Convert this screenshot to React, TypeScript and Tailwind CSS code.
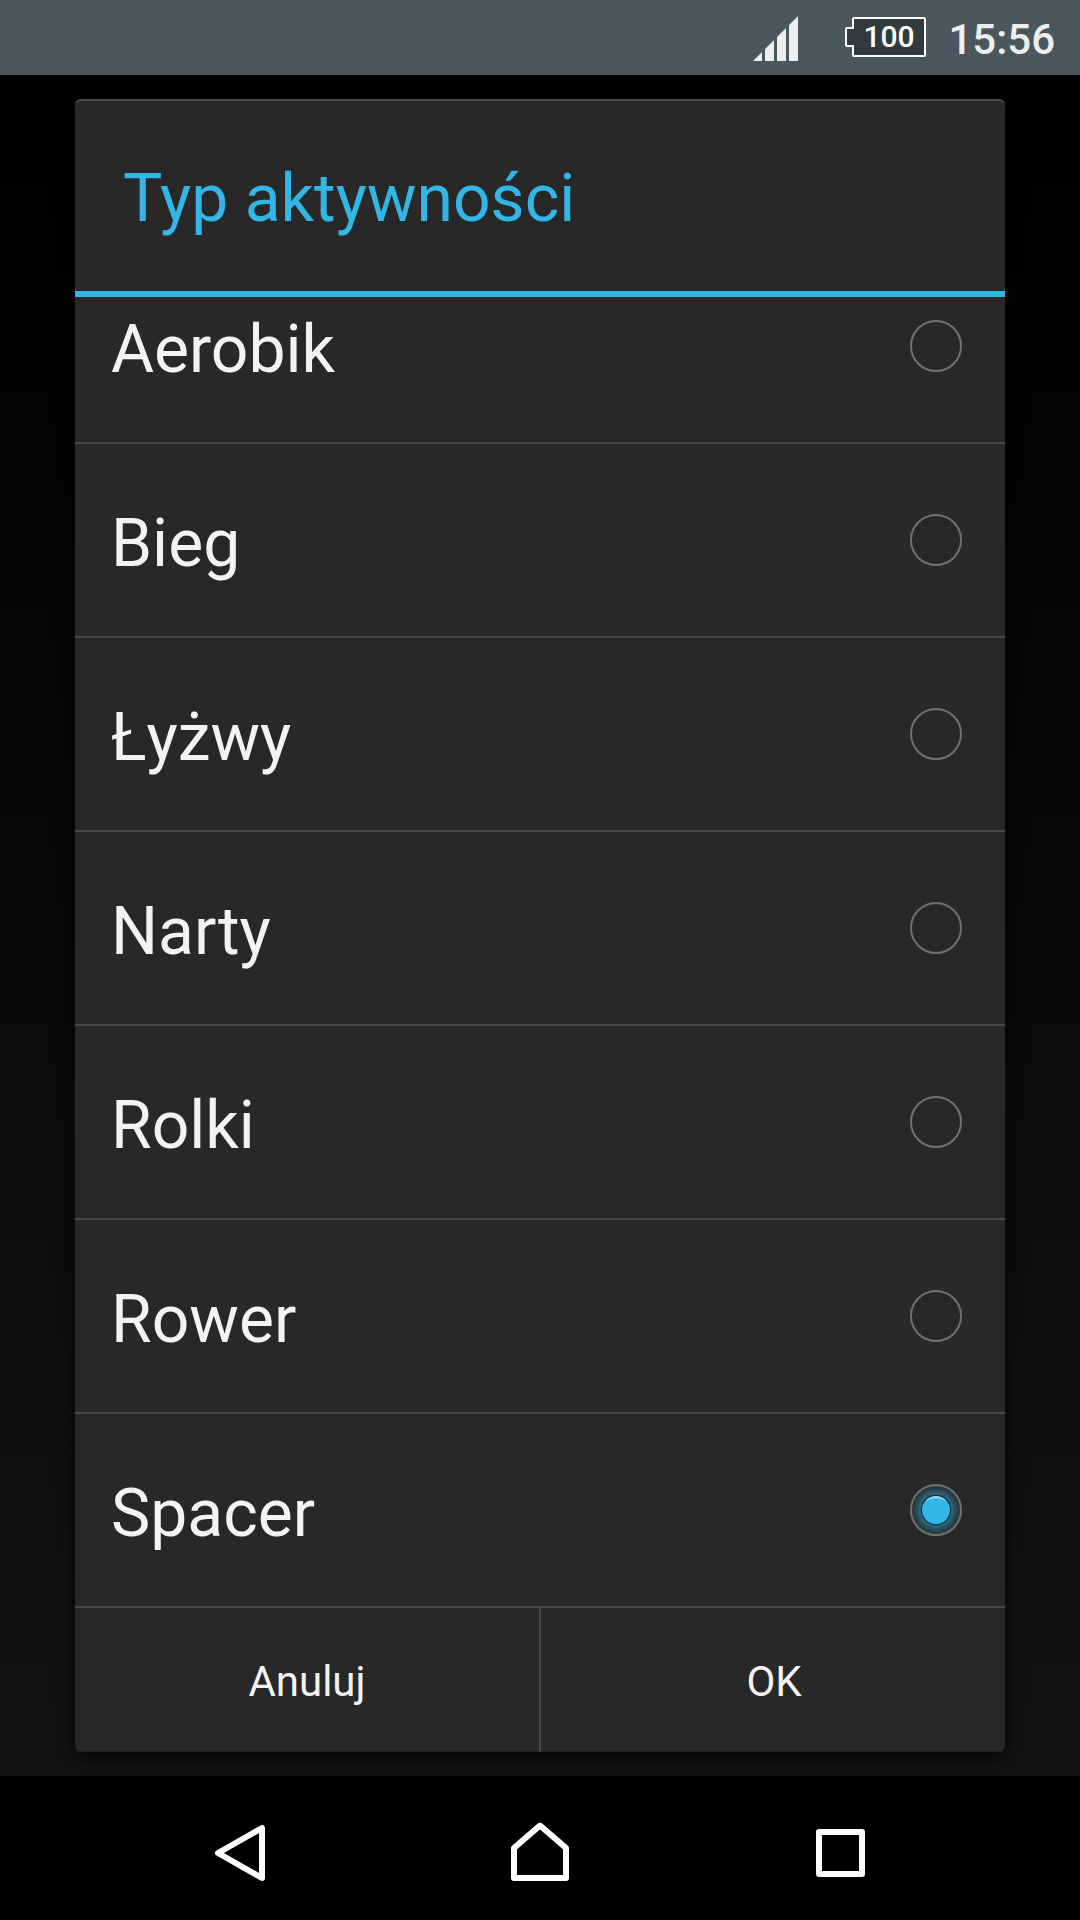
import React from "react";

const activities = ["Aerobik", "Bieg", "Łyżwy", "Narty", "Rolki", "Rower", "Spacer"];

function Radio({ checked }: { checked: boolean }) {
  return (
    <svg width="52" height="52" viewBox="0 0 52 52" className="shrink-0">
      <defs>
        <radialGradient id="glow">
          <stop offset="0.55" stopColor="#2a7896" />
          <stop offset="0.75" stopColor="#2b5160" />
          <stop offset="1" stopColor="#292e31" />
        </radialGradient>
        <linearGradient id="shine" x1="0" y1="0" x2="0" y2="1">
          <stop offset="0" stopColor="#a8e0f6" />
          <stop offset="0.22" stopColor="#33b5e5" />
        </linearGradient>
      </defs>
      {checked && <circle cx="26" cy="26" r="25" fill="url(#glow)" />}
      <circle cx="26" cy="26" r="25" fill="none" stroke="#707070" strokeWidth="2" />
      {checked && (
        <>
          <circle cx="26" cy="26" r="15.2" fill="#102a34" />
          <circle cx="26" cy="26" r="14" fill="url(#shine)" />
          <circle cx="26" cy="27.3" r="12.9" fill="#33b5e5" />
        </>
      )}
    </svg>
  );
}

function StatusBar() {
  return (
    <header className="flex h-[75px] items-start justify-end bg-[#49575e] pr-[25px]">
      <svg width="45" height="45" viewBox="0 0 45 45" className="mt-[16px] mr-[47px]" fill="#edeef0">
        <path d="M0 45L9 36V45ZM12 45V33L21 24V45ZM24 45V21L33 12V45ZM36 45V9L45 0V45Z" />
      </svg>
      <div className="relative mt-[17px] h-[40px] w-[81px]">
        <svg width="81" height="40" viewBox="0 0 81 40" className="absolute inset-0">
          <path
            d="M9 1H79a1 1 0 0 1 1 1V38a1 1 0 0 1-1 1H9a1 1 0 0 1-1-1V29H2a1 1 0 0 1-1-1V12a1 1 0 0 1 1-1H8V2a1 1 0 0 1 1-1Z"
            fill="#303b3f"
            stroke="#fff"
            strokeWidth="2"
          />
        </svg>
        <span className="relative block pl-[18px] text-[30px] leading-[40px] font-medium text-white">100</span>
      </div>
      <span className="mt-[15px] ml-[22px] text-[42px] leading-[50px] font-medium text-[#edeef0]">15:56</span>
    </header>
  );
}

function NavBar() {
  return (
    <nav className="flex h-[144px] items-start bg-black pt-[41px] pl-[212px]">
      <svg width="58" height="72" viewBox="212 1817 58 72" fill="none" stroke="#fff" strokeWidth="6" strokeLinejoin="round">
        <path d="M262 1828V1878L218 1853Z" />
      </svg>
      <svg width="60" height="72" viewBox="510 1817 60 72" fill="none" stroke="#fff" strokeWidth="6" strokeLinejoin="round" className="ml-[240px]">
        <path d="M540 1825.5L566 1848V1878H514V1848Z" />
      </svg>
      <svg width="51" height="72" viewBox="815 1817 51 72" fill="none" stroke="#fff" strokeWidth="6" strokeLinejoin="round" className="ml-[245px]">
        <path d="M819 1832H862V1874H819Z" />
      </svg>
    </nav>
  );
}

export default function App() {
  return (
    <div className="flex h-[1920px] w-[1080px] flex-col overflow-hidden bg-black font-[Roboto,sans-serif]">
      <StatusBar />
      <main className="h-[1701px] overflow-hidden bg-[linear-gradient(to_bottom,#000000,#111315)] px-[75px] pt-[24px]">
        <section className="flex h-[1653px] flex-col overflow-hidden rounded-[6px] bg-[#282828] shadow-[0_6px_18px_rgba(0,0,0,0.75),inset_0_2px_0_#484848,inset_0_-1px_0_#1e1e1e]">
          <h1 className="h-[198px] shrink-0 border-b-[6px] border-[#33b5e5] pt-[61px] pl-[48px] text-[66px] leading-[78px] text-[#33b5e5]">
            Typ aktywności
          </h1>
          <div className="h-[1311px] shrink-0 overflow-hidden">
            <ul className="-mt-[47px]">
              {activities.map((name) => (
                <li key={name} className="flex h-[194px] items-center justify-between border-b-2 border-[#484848] pr-[43px] pl-[36px]">
                  <span className="pt-[7px] text-[66px] leading-[78px] text-[#f3f3f3]">{name}</span>
                  <Radio checked={name === "Spacer"} />
                </li>
              ))}
            </ul>
          </div>
          <div className="flex h-[144px] text-[42px] text-[#f3f3f3]">
            <button className="w-[464px] pt-[2px]">Anuluj</button>
            <button className="flex-1 border-l-2 border-[#484848] pt-[2px] pl-[2px]">OK</button>
          </div>
        </section>
      </main>
      <NavBar />
    </div>
  );
}
